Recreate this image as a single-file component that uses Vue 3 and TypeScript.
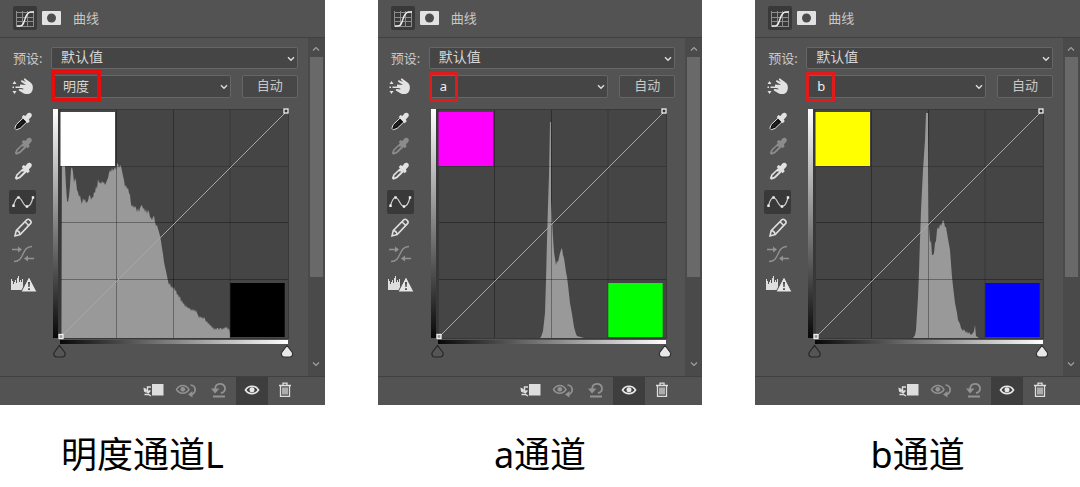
<script setup lang="ts">
interface Panel {
  id: string
  channel: string
  caption: string
  swatchTop: string
  swatchBottom: string
  histogram: string
}

const panels: Panel[] = [
  {
    id: 'l',
    channel: '明度',
    caption: '明度通道L',
    swatchTop: '#ffffff',
    swatchBottom: '#000000',
    histogram:
      '61.5,338 62,166 65,166 66,186 67,201 68,202 69,196 70,186 71,169 72,167 73,172 74,183 75,178 76,181 77,190 78,192 79,197 80,195 81,201 82,204 83,198 84,201 85,199 86,203 87,202 88,201 89,196 90,195 91,200 92,197 93,198 94,192 95,193 96,186 97,189 98,179 99,183 100,182 101,184 102,181 103,183 104,182 105,185 106,183 107,180 108,178 109,173 110,170 111,172 112,168 113,171 114,169 115,167 116,170 117,163 118,164 119,168 120,165 121,166 122,171 123,176 124,180 125,187 126,185 127,189 128,188 129,193 130,195 131,204 132,207 133,205 134,208 135,206 136,208 137,212 138,208 139,212 140,208 141,206 142,205 143,209 144,208 145,212 146,209 147,214 148,210 149,212 150,217 151,218 152,220 153,217 154,216 155,222 156,226 157,225 158,229 159,232 160,236 161,241 162,248 163,254 164,262 165,267 166,271 167,276 168,281 169,285 170,283 171,288 172,286 173,289 174,287 175,291 176,290 177,295 178,294 179,298 180,296 181,302 182,300 183,304 184,303 185,307 186,305 187,308 188,307 189,309 190,308 191,311 192,309 193,311 194,309 195,312 196,310 197,313 198,315 199,318 200,316 201,318 202,317 203,319 204,317 205,319 206,322 207,321 208,324 209,323 210,326 211,325 212,328 213,327 214,330 215,328 216,330 217,328 218,328 219,330 220,328 221,328 222,330 223,328 224,329 225,327 226,328 227,327 228,330 229,328 230,333 230,338',
  },
  {
    id: 'a',
    channel: 'a',
    caption: 'a通道',
    swatchTop: '#ff00ff',
    swatchBottom: '#00ff00',
    histogram:
      '162,338 163,337 165,331 167,313 168,280 169,240 170,205 171,175 172,122 173,122 173,200 174,217 175,237 176,252 178,265 179,261 180,262 182,253 183,250 184,248 185,255 186,258 188,272 189,277 190,285 192,303 194,314 196,327 198,334 199,336 206,338',
  },
  {
    id: 'b',
    channel: 'b',
    caption: 'b通道',
    swatchTop: '#ffff00',
    swatchBottom: '#0000ff',
    histogram:
      '158,338 160,335 161,330 163,297 164,272 165,240 166,210 168,170 170,140 171,113 173,113 173,133 174,227 175,243 176,240 177,255 178,255 179,253 180,243 181,241 182,230 183,227 184,229 185,224 186,226 188,220 189,222 190,227 191,227 192,233 193,239 195,250 197,277 198,286 200,303 202,313 203,320 205,324 206,328 208,331 209,329 211,333 212,331 213,334 214,332 216,335 218,333 219,331 220,325 221,336 224,338',
  },
]
</script>

<template>
  <main class="board">
    <section v-for="p in panels" :key="p.id" class="column">
      <div class="panel">
        <header class="head">
          <button type="button" class="curve-badge" aria-label="曲线">
            <svg width="24" height="24" viewBox="0 0 24 24" fill="none">
              <path d="M3.5 5v16M9.5 5v16M14.5 5v16M20.5 5v16M3 6.5h18M3 11.5h18M3 15.5h18M3 20.5h18" stroke="#8c8c8c" />
              <path d="M4 20h3c3 0 3.8-3 5-7s2.5-6.500 5.5-7H21" stroke="#f0f0f0" stroke-width="1.3" />
            </svg>
          </button>
          <button type="button" class="mask-badge" aria-label="蒙版">
            <svg width="19" height="14" viewBox="0 0 19 14">
              <rect width="19" height="14" rx="1" fill="#e2e2e2" />
              <circle cx="9.5" cy="7" r="4.5" fill="#4c4c4c" />
            </svg>
          </button>
          <h2 class="title">曲线</h2>
        </header>

        <div class="body">
          <div class="controls">
            <div class="row preset">
              <label class="label" :for="'preset-' + p.id">预设:</label>
              <div class="field">
                <select :id="'preset-' + p.id" class="select large">
                  <option>默认值</option>
                </select>
                <svg class="chevron" width="8" height="6" viewBox="0 0 8 6" fill="none">
                  <path d="M1 1.2l3 3 3-3" stroke="#dedede" stroke-width="1.4" />
                </svg>
              </div>
            </div>

            <div class="row channel">
              <button type="button" class="tool hand" aria-label="目标调整">
                <svg width="24" height="20" viewBox="0 0 24 20" fill="#e2e2e2">
                  <path d="M3.5 4L5.5 7h-4zM3.500 17L1.5 14h4z" />
                  <path d="M1.500 9.500h1.500v1.500H1.500zM4.500 9.500h6v1.500h-6z" />
                  <path d="M9 7.600L15 8 10.500 5c-1.200-.9-.2-2.300 1.100-1.600l3.500 1.600-2-2c-.8-1.100.5-2 1.600-1.100l4.500 3.300c2.200 1.800 2.900 3.500 2.600 6.200-.3 3.500-2.500 5.800-5.700 5.700-2 0-3.300-.5-4.900-1.500l-3-1.800c-1-.7-.4-2 .8-1.800l3.300.5v-1L9 10.800z" />
                </svg>
              </button>
              <div class="field">
                <select class="select" :class="{ latin: p.id !== 'l' }" aria-label="通道">
                  <option>{{ p.channel }}</option>
                </select>
                <svg class="chevron" width="8" height="6" viewBox="0 0 8 6" fill="none">
                  <path d="M1 1.2l3 3 3-3" stroke="#dedede" stroke-width="1.4" />
                </svg>
                <span class="mark" :class="{ wide: p.id === 'l' }"></span>
              </div>
              <button type="button" class="auto">自动</button>
            </div>

            <div class="row editor">
              <div class="tools">
                <div class="group droppers">
                  <button v-for="k in ['black', 'gray', 'white']" :key="k" type="button" class="tool" :class="k" :aria-label="k">
                    <svg width="24" height="24" viewBox="0 0 24 24">
                      <path class="tube" d="M12.2 8l3.800 3.800-6.800 6.500-3.900 1.500-1.500-1.500 1.500-3.800z" />
                      <path class="ink" d="M10.500 11.500h2.900l-5.300 5.300-2 .7.500-2.100z" />
                      <path class="bulb" d="M10.700 7l1.900-1.900 1.800.8 2-2.300c2.500-2.400 6 .9 3.700 3.500L17.800 9.500l.9 1.700-2 2z" />
                    </svg>
                  </button>
                </div>
                <div class="group">
                  <button type="button" class="tool active" aria-label="编辑点">
                    <svg width="26" height="24" viewBox="0 0 26 24" fill="none">
                      <path d="M3.5 15.5C5 10.500 6.500 7.500 8.500 7.500c3.500 0 4.500 9 8.500 9 2.500 0 4.500-3 6-9" stroke="#cfcfcf" stroke-width="1.2" />
                      <path d="M2.3 14.5h2.4v2.4H2.3zM7.3 6.300h2.4v2.4H7.3zM15.8 15.3h2.4v2.4h-2.4zM21.8 6.3h2.4v2.4h-2.4z" fill="#f0f0f0" />
                    </svg>
                  </button>
                  <button type="button" class="tool" aria-label="铅笔">
                    <svg width="24" height="24" viewBox="0 0 24 24" fill="none" stroke="#dedede" stroke-width="1.6">
                      <path d="M4 20l1.200-5.400L16 3.700c1.800-1.500 5.200 2 3.700 3.700L9.200 18.600z" />
                      <path d="M14 5.700l4 4M5.2 14.600c2.200.2 3.600 1.700 4 4" />
                    </svg>
                  </button>
                  <button type="button" class="tool" aria-label="平滑">
                    <svg width="26" height="24" viewBox="0 0 26 24" fill="none" stroke="#929292" stroke-width="1.4">
                      <path d="M2 7.5h7M24 16.5h-6M4 19.5c11 0 7-15 18-15" />
                      <path d="M8 4.5l4 3-4 3zM18 13.5l-4 3 4 3z" fill="#929292" stroke="none" />
                    </svg>
                  </button>
                </div>
                <div class="group">
                  <button type="button" class="tool" aria-label="直方图警告">
                    <svg width="28" height="24" viewBox="0 0 28 24">
                      <path d="M2 18V7h1v2h1v3h1v-2h1V8h1v3h1V6h1V4h1v6h1V8h1v2h1V7h1v11z" fill="#dedede" />
                      <path d="M20 4.500l8 15.500H12z" fill="#e6e6e6" stroke="#505050" />
                      <path d="M19 10h2l-.4 5h-1.200zM19.100 16.200h1.800V18h-1.800z" fill="#444" />
                    </svg>
                  </button>
                </div>
              </div>

              <svg class="graph" width="244" height="254" viewBox="51 106 244 254" role="img" aria-label="直方图">
                <defs>
                  <linearGradient :id="'v-' + p.id" x1="0" y1="0" x2="0" y2="1">
                    <stop offset="0" stop-color="#fff" />
                    <stop offset="1" stop-color="#080808" />
                  </linearGradient>
                  <linearGradient :id="'h-' + p.id">
                    <stop offset="0" stop-color="#080808" />
                    <stop offset="1" stop-color="#fff" />
                  </linearGradient>
                </defs>
                <rect x="53" y="109" width="5" height="229" :fill="`url(#v-${p.id})`" />
                <rect x="58" y="109" width="231" height="230" fill="#383838" />
                <rect x="61" y="110" width="227" height="228" fill="#454545" />
                <rect x="60" y="340" width="228" height="4" :fill="`url(#h-${p.id})`" />
                <polygon :points="p.histogram" fill="#999" />
                <path d="M116.5 110v228M173.5 110v228M61 222.5h227M61 279.5h227" stroke="#000" stroke-opacity=".32" />
                <path d="M230 110v228M61 166.5h227" stroke="#000" stroke-opacity=".2" />
                <path d="M61 337L286 112" stroke="#a8a8a8" />
                <rect x="60.5" y="112" width="54.5" height="54" :fill="p.swatchTop" />
                <rect x="230.3" y="283" width="54.4" height="54" :fill="p.swatchBottom" />
                <rect x="284" y="109" width="4" height="4" fill="#333" stroke="#f0f0f0" stroke-width="1.3" />
                <rect x="59" y="334.5" width="4" height="4" fill="#999" stroke="#f0f0f0" stroke-width="1.3" />
                <path d="M59.5 345.5l5 6.500c1.4 2 .4 5-2 5h-6c-2.4 0-3.4-3-2-5z" fill="#555" stroke="#262626" stroke-width="1.2" />
                <path d="M287 345.5l5 6.500c1.4 2 .4 5-2 5h-6c-2.4 0-3.4-3-2-5z" fill="#e8e8e8" stroke="#303030" stroke-width="1.2" />
              </svg>
            </div>
          </div>

          <div class="scroll">
            <svg width="8" height="6" viewBox="0 0 8 6" fill="none">
              <path d="M1 4.5l3-3 3 3" stroke="#a0a0a0" stroke-width="1.2" />
            </svg>
            <div class="thumb"></div>
            <svg class="down" width="8" height="6" viewBox="0 0 8 6" fill="none">
              <path d="M1 1.5l3 3 3-3" stroke="#a0a0a0" stroke-width="1.2" />
            </svg>
          </div>
        </div>

        <footer class="foot">
          <button type="button" class="action" aria-label="剪切到图层">
            <svg width="22" height="16" viewBox="0 0 22 16" fill="none">
              <rect x="10" y="2" width="11.5" height="11.5" fill="#dedede" />
              <path d="M9 5H5.500v6M2 6.500l3.500 3M2.500 12.500h4L9 14" stroke="#dedede" stroke-width="1.4" />
              <path d="M1.500 5.500l3 1.500v4l-2.500-1.500zM5 9l3.500-1v1.500L6 12z" fill="#dedede" />
            </svg>
          </button>
          <button type="button" class="action" aria-label="查看上一状态">
            <svg width="22" height="16" viewBox="0 0 22 16" fill="none" stroke="#929292" stroke-width="1.5">
              <path d="M1.500 7.500c3-5.500 9.500-5.500 12.500 0-3 5-9.500 5-12.500 0z" />
              <circle cx="7.8" cy="7.3" r="2.4" fill="#929292" stroke="none" />
              <path d="M15.5 3c5.500.5 6.500 7.500 1 9.500" stroke-width="1.7" />
              <path d="M17.500 9l-4.500 3.500 4.500 3z" fill="#929292" stroke="none" />
            </svg>
          </button>
          <button type="button" class="action" aria-label="复位">
            <svg width="18" height="16" viewBox="0 0 18 16" fill="none" stroke="#929292" stroke-width="1.8">
              <path d="M5 8C5-.5 15 .5 15 6.500c0 2.500-1.500 4-4 4.500M3 14.500h12" />
              <path d="M1 6.500h8.500L5 11.500z" fill="#929292" stroke="none" />
            </svg>
          </button>
          <button type="button" class="action on" aria-label="可见性">
            <svg width="16" height="12" viewBox="0 0 16 12" fill="none">
              <path d="M1.5 6c3-5 10-5 13 0-3 4.800-10 4.800-13 0z" stroke="#e8e8e8" stroke-width="1.7" />
              <circle cx="8" cy="5.8" r="2.5" fill="#e8e8e8" />
            </svg>
          </button>
          <button type="button" class="action" aria-label="删除">
            <svg width="14" height="16" viewBox="0 0 14 16" fill="none" stroke="#dedede" stroke-width="1.3">
              <path d="M1 3.5h12M5 3V1.2h4V3M2.5 3.5v10.800h9V3.500M5 5.500v7M7 5.500v7M9 5.500v7" />
            </svg>
          </button>
        </footer>
      </div>
      <p class="caption" :class="{ shifted: p.id === 'l' }">{{ p.caption }}</p>
    </section>
  </main>
</template>

<style>
body {
  margin: 0;
  background: #fff;
}
</style>

<style scoped>
.board {
  display: grid;
  grid-template-columns: repeat(3, 1fr);
  gap: 53px;
  font-family: 'Noto Sans', 'Noto Sans CJK SC', sans-serif;
  font-size: 13px;
  color: #c8c8c8;
}
.board * {
  box-sizing: border-box;
}
button,
select {
  font: inherit;
  color: inherit;
  margin: 0;
  padding: 0;
  border: 0;
  background: none;
  appearance: none;
}
svg {
  display: block;
  flex: none;
}
.column {
  min-width: 0;
}
.panel {
  background: #535353;
}
.head {
  display: flex;
  align-items: center;
  height: 38px;
  padding: 0 13px 1px;
  border-bottom: 1px solid #404040;
}
.curve-badge {
  background: #393939;
  border-radius: 2px;
}
.mask-badge {
  margin: 0 12px 0 5px;
}
.title {
  margin: 0;
  font-size: 13px;
  font-weight: 400;
  line-height: 20px;
}
.body {
  display: flex;
}
.controls {
  flex: 1;
  min-width: 0;
  padding: 9px 10px 16px 9px;
}
.row {
  display: flex;
}
.label {
  flex: none;
  width: 42px;
  padding-left: 4px;
  line-height: 22px;
}
.field {
  position: relative;
  flex: 1;
  min-width: 0;
}
.select {
  display: block;
  width: 100%;
  height: 22px;
  padding: 0 20px 2px 11px;
  background: #454545;
  border: 1px solid #666;
  border-radius: 2px;
  line-height: 18px;
  color: #d6d6d6;
}
.select.large {
  font-size: 14px;
  padding-left: 9px;
}
.select.latin {
  padding-left: 10px;
  color: #f0f0f0;
}
.chevron {
  position: absolute;
  right: 3px;
  top: 9px;
}
.channel {
  margin-top: 6px;
}
.channel .select,
.auto {
  height: 23px;
}
.mark {
  position: absolute;
  left: 0;
  top: -3px;
  width: 29px;
  height: 30px;
  border: 3px solid #e01b1b;
  pointer-events: none;
}
.mark.wide {
  top: -5px;
  width: 50px;
  height: 32px;
  border: 4px solid #e80c0c;
}
.auto {
  flex: none;
  width: 56px;
  padding-bottom: 2px;
  margin-left: 11px;
  border: 1px solid #666;
  border-radius: 2px;
  background: #474747;
  line-height: 19px;
}
.tool {
  display: flex;
  align-items: center;
  justify-content: center;
  width: 27px;
  height: 24px;
}
.tool.hand {
  flex: none;
  height: 23px;
  margin-right: 15px;
}
.editor {
  margin-top: 8px;
}
.tools {
  display: flex;
  flex: none;
  flex-direction: column;
  gap: 6px;
  width: 42px;
  padding-top: 4px;
}
.group {
  display: flex;
  flex-direction: column;
  gap: 2px;
}
.droppers {
  gap: 1px;
}
.tool.active {
  background: #393939;
  border-radius: 2px;
}
.tube,
.bulb {
  fill: #e2e2e2;
}
.black .tube {
  fill: #111;
  stroke: #e2e2e2;
}
.ink {
  fill: #222;
}
.gray .tube,
.gray .bulb {
  fill: #8c8c8c;
}
.gray .ink {
  fill: #535353;
}
.white .ink {
  fill: #555;
}
.scroll {
  display: flex;
  flex: none;
  flex-direction: column;
  align-items: center;
  width: 17px;
  padding: 8px 0 9px;
  background: #4a4a4a;
}
.thumb {
  width: 13px;
  height: 220px;
  margin-top: 5px;
  background: #696969;
}
.down {
  margin-top: auto;
}
.foot {
  display: flex;
  justify-content: flex-end;
  gap: 1px;
  height: 29px;
  padding-right: 24px;
  border-top: 1px solid #404040;
}
.action {
  display: flex;
  align-items: center;
  justify-content: center;
  width: 32px;
  padding-bottom: 2px;
}
.action.on {
  background: #3e3e3e;
}
.caption {
  margin: 0;
  padding-top: 24px;
  font-size: 36px;
  line-height: 52px;
  text-align: center;
  color: #000;
}
.caption.shifted {
  padding-right: 40px;
}
</style>
